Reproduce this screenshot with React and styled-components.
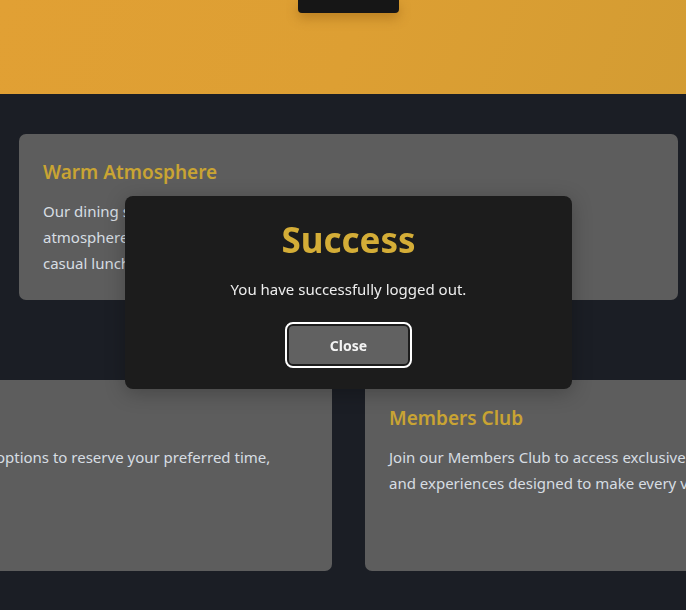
import React from "react";
import styled, { createGlobalStyle } from "styled-components";

const Global = createGlobalStyle`
  html, body { margin: 0; padding: 0; }
  body {
    background: #1b1e25;
    overflow: hidden;
    font-family: "Noto Sans", "Open Sans", sans-serif;
  }
`;

const Page = styled.div`
  width: 697px;
  min-height: 610px;
  background: #1b1e25;
`;

const Hero = styled.header`
  height: 94px;
  display: flex;
  justify-content: center;
  align-items: flex-start;
  background: linear-gradient(110deg, #e1a034 0%, #dd9f33 50%, #d39c33 100%);
`;

const NavButton = styled.div`
  width: 101px;
  height: 13px;
  background: #161616;
  border-radius: 0 0 4px 4px;
  box-shadow: 0 5px 12px rgba(120, 70, 0, 0.35);
`;

const Section = styled.section`
  padding: 40px 19px 0;
  display: flex;
  flex-direction: column;
  gap: 80px;
`;

const Row = styled.div`
  display: flex;
  justify-content: center;
  gap: 33px;
`;

const Card = styled.article`
  box-sizing: border-box;
  background: #5d5d5d;
  border-radius: 7px;
  padding: 24px;
  flex: ${(p) => (p.$w ? `0 0 ${p.$w}px` : "1 1 auto")};
  min-height: ${(p) => (p.$minH ? `${p.$minH}px` : "0")};
`;

const CardTitle = styled.h3`
  margin: 2px 0 14px;
  font-size: 19px;
  line-height: 24px;
  font-weight: 600;
  color: #c9a433;
  white-space: nowrap;
`;

const CardText = styled.p`
  margin: 0;
  font-size: 15px;
  line-height: 26px;
  color: #d7dde3;
  white-space: nowrap;
`;

const Modal = styled.div`
  position: fixed;
  top: 196px;
  left: 125px;
  width: 447px;
  height: 193px;
  box-sizing: border-box;
  background: #1c1c1c;
  border-radius: 8px;
  padding: 22px 24px 25px;
  display: flex;
  flex-direction: column;
  align-items: center;
  box-shadow: 0 4px 20px rgba(0, 0, 0, 0.25);
`;

const ModalTitle = styled.h2`
  margin: 0;
  font-size: 35px;
  line-height: 44px;
  font-weight: 700;
  color: #d4ad37;
`;

const ModalText = styled.p`
  margin: 15px 0 0;
  font-size: 15px;
  line-height: 24px;
  color: #ededed;
`;

const CloseButton = styled.button`
  margin-top: 25px;
  width: 119px;
  height: 38px;
  border: none;
  border-radius: 4px;
  background: #616161;
  color: #f4f4f4;
  font-family: inherit;
  font-size: 14px;
  font-weight: 700;
  outline: 2px solid #ffffff;
  outline-offset: 2px;
`;

const CARD_W = 564;

export default function App() {
  return (
    <>
      <Global />
      <Page>
        <Hero>
          <NavButton />
        </Hero>
        <Section>
          <Card>
            <CardTitle>Warm Atmosphere</CardTitle>
            <CardText>
              Our dining space is designed to offer a cozy, welcoming and inviting
              <br />
              atmosphere, whether you are celebrating a special occasion or having a
              <br />
              casual lunch with friends and family.
            </CardText>
          </Card>
          <Row>
            <Card $w={CARD_W} $minH={191}>
              <CardTitle>Online Reservations</CardTitle>
              <CardText>
                Use our easy online booking options to reserve your preferred time,
                <br />
                date and party size.
              </CardText>
            </Card>
            <Card $w={CARD_W} $minH={191}>
              <CardTitle>Members Club</CardTitle>
              <CardText>
                Join our Members Club to access exclusive benefits, rewards,
                <br />
                and experiences designed to make every visit memorable.
              </CardText>
            </Card>
          </Row>
        </Section>
        <Modal role="dialog">
          <ModalTitle>Success</ModalTitle>
          <ModalText>You have successfully logged out.</ModalText>
          <CloseButton>Close</CloseButton>
        </Modal>
      </Page>
    </>
  );
}
